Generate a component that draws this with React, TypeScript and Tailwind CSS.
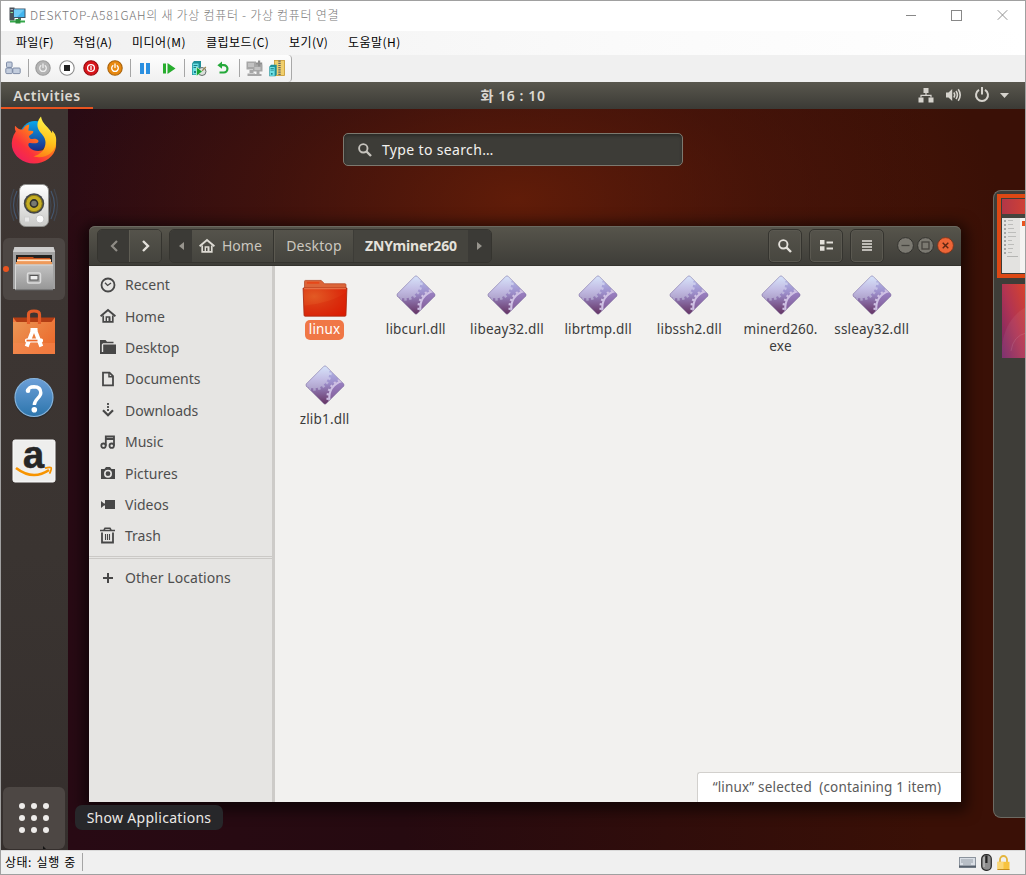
import React from "react";

const KR = "font-['Noto_Sans_CJK_KR',sans-serif]";

/* ---------- host window icons ---------- */

const HostLogo = () => (
  <svg width="17" height="17" viewBox="0 0 17 17">
    <rect x="0.5" y="0.5" width="5" height="13" fill="#4a5057" />
    <rect x="1.5" y="2" width="3" height="1" fill="#aab" />
    <rect x="1.5" y="5" width="3" height="1" fill="#8d9" />
    <rect x="4" y="1.5" width="12.5" height="9.5" fill="#3f5468" />
    <rect x="5" y="2.5" width="10.5" height="7.5" fill="#43b4ee" />
    <path d="M5 2.5h10.5L8 10H5z" fill="#6fcbf6" />
    <rect x="9" y="11" width="3" height="2" fill="#56616b" />
    <path d="M1 13.5h15v2H1z" fill="#35a84a" />
    <rect x="6.5" y="12" width="5" height="4.5" fill="#2c8f3c" />
  </svg>
);

const Round = ({ fill, ring, children }: { fill: string; ring: string; children: React.ReactNode }) => (
  <svg width="16" height="16" viewBox="0 0 16 16">
    <circle cx="8" cy="8" r="7.2" fill={fill} stroke={ring} strokeWidth="1.1" />
    {children}
  </svg>
);

const PowerGlyph = ({ c = "#fff" }: { c?: string }) => (
  <g fill="none" stroke={c} strokeWidth="1.3" strokeLinecap="round">
    <path d="M5.8 5.7a3.3 3.3 0 1 0 4.4 0" />
    <path d="M8 4v3.6" />
  </g>
);

const KeysIcon = () => (
  <svg width="16" height="14" viewBox="0 0 16 14" fill="#c3cddd" stroke="#75839f" strokeWidth="0.9">
    <rect x="1.5" y="1" width="5.6" height="5.4" rx="1" />
    <rect x="0.8" y="7" width="6.5" height="5.6" rx="1" />
    <rect x="7.8" y="7" width="7.4" height="5.6" rx="1" />
  </svg>
);

const Server = () => (
  <g>
    <path d="M1 3.5 3 1h7v11.5L8.5 15H1z" fill="#1e8f98" />
    <rect x="1.7" y="3.6" width="5.8" height="10.8" fill="#6fe0e4" />
    <path d="M2.5 5.5h4M2.5 7.5h4" stroke="#13727c" strokeWidth="0.9" />
    <rect x="3" y="11" width="2" height="2" fill="#18808a" />
  </g>
);

const CheckpointIcon = () => (
  <svg width="16" height="17" viewBox="0 0 16 17">
    <Server />
    <circle cx="11" cy="11.5" r="4" fill="#dce0dc" stroke="#66706c" />
    <path d="m11 11 3.8-4" stroke="#985" strokeWidth="1.2" />
    <path d="M5.5 7v9l6-4.5z" fill="#17a331" stroke="#eaffea" strokeWidth="0.6" />
  </svg>
);

const RevertIcon = () => (
  <svg width="14" height="14" viewBox="0 0 14 14" fill="none">
    <path d="M4.5 4.2h3.3a3.6 3.6 0 0 1 0 7.3H3.5" stroke="#25a93a" strokeWidth="2.2" />
    <path d="M6 0.6v7.2L1.4 4.2z" fill="#25a93a" />
  </svg>
);

const EnhancedIcon = () => (
  <svg width="17" height="17" viewBox="0 0 17 17" fill="#a6a6a6">
    <path d="M0.500 1.500H10v8H0.500zM3.500 10h4v3h-4zM1.500 13.500H9V16H1.500z" />
    <path d="M7 4.500h9.500v7H7zM10.500 11.500h3V14h-3zM8.500 14h7v2h-7z" />
    <path d="M12 0.500h2.200v2h2v2.200h-2v1.800H12V4.700h-2V2.500h2z" fill="#8f8f8f" />
    <path d="M2 3h6v4H2zM8.500 7h6v3h-6z" fill="#c2c2c2" />
  </svg>
);

const ArchiveIcon = () => (
  <svg width="16" height="17" viewBox="0 0 16 17">
    <rect x="5.500" y="0.5" width="10" height="15" fill="#f0cf6c" stroke="#c7982d" strokeWidth="0.8" />
    <path d="M10.500 0.500v14.500" stroke="#666" strokeWidth="2.400" strokeDasharray="1.2 1" />
    <g transform="translate(-.5 4) scale(.82)">
      <Server />
    </g>
  </svg>
);

const Sep = () => <span className="h-[18px] w-px shrink-0 bg-[#a5a5a5]" />;

const TitleBar = () => (
  <header className={`flex h-[30px] shrink-0 items-center bg-white pb-[2px] pl-2 text-[12px] font-light text-[#777] ${KR}`}>
    <HostLogo />
    <span className="ml-1 whitespace-nowrap tracking-[0.720px]">DESKTOP-A581GAH의 새 가상 컴퓨터 - 가상 컴퓨터 연결</span>
    <div className="ml-auto mr-[17px] flex items-center gap-[35px]">
      <svg width="10" height="11" viewBox="0 0 10 11"><path d="M0 5.500h10" stroke="#888" /></svg>
      <svg width="11" height="11" viewBox="0 0 11 11"><rect x="0.5" y="0.5" width="10" height="10" fill="none" stroke="#888" /></svg>
      <svg width="11" height="12" viewBox="0 0 12 12"><path d="m.8.800 10.400 10.400M11.200.800.800 11.200" stroke="#888" /></svg>
    </div>
  </header>
);

const MenuBar = () => (
  <nav className={`flex h-[24px] shrink-0 items-center bg-[linear-gradient(90deg,#f0f0f0,#fafafa_60%,#fff)] pb-[2px] pl-[15px] text-[12px] text-black ${KR}`}>
    <span className="w-[57px] tracking-[0.200px]">파일(F)</span>
    <span className="w-[59px] tracking-[0.400px]">작업(A)</span>
    <span className="w-[74px] tracking-[0.500px]">미디어(M)</span>
    <span className="w-[83px] tracking-[0.500px]">클립보드(C)</span>
    <span className="w-[59px] tracking-[0.450px]">보기(V)</span>
    <span className="tracking-[0.450px]">도움말(H)</span>
  </nav>
);

const ToolBar = () => (
  <div className="flex h-[27px] shrink-0 bg-[#f0f0f0]">
    <div className="flex w-[291px] items-center rounded-r-sm border-r border-[#a8a8a8] bg-[linear-gradient(#fdfdfd,#f0f0f0)] pb-px pl-[4px]">
      <KeysIcon />
      <span className="ml-[7px] flex"><Sep /></span>
      <div className="ml-[6px] flex gap-2">
        <Round fill="#b4b4b4" ring="#9b9b9b"><PowerGlyph c="#eee" /></Round>
        <Round fill="#fff" ring="#8c8c8c"><rect x="5" y="5" width="6" height="6" fill="#222" /></Round>
        <Round fill="#d8151b" ring="#98070b">
          <circle cx="8" cy="8" r="3.400" fill="none" stroke="#fff" strokeWidth="1.300" />
          <path d="M8 6v4" stroke="#fff" strokeWidth="1.300" />
        </Round>
        <Round fill="#e8890f" ring="#a9620a"><PowerGlyph /></Round>
      </div>
      <span className="ml-[7px] flex"><Sep /></span>
      <svg className="ml-[9px]" width="10" height="11" viewBox="0 0 10 11" fill="#2a8fe0"><path d="M0 0h4v11H0zM6 0h4v11H6z" /></svg>
      <svg className="ml-[13px]" width="13" height="11" viewBox="0 0 13 11" fill="#27ad2e"><path d="M0 .500h3v10H0zM4.500 0v11L12.500 5.500z" /></svg>
      <span className="ml-[8px] flex"><Sep /></span>
      <span className="ml-[6px]"><CheckpointIcon /></span>
      <span className="ml-[9px]"><RevertIcon /></span>
      <span className="ml-[9px] flex"><Sep /></span>
      <span className="ml-[6px]"><EnhancedIcon /></span>
      <span className="ml-[6px]"><ArchiveIcon /></span>
    </div>
  </div>
);

const StatusBar = () => (
  <footer className={`flex h-[24px] shrink-0 items-center border-t border-[#d9d9d9] bg-[#f0f0f0] pb-px pl-1 text-[12px] text-black ${KR}`}>
    <span className="w-[77px] whitespace-nowrap tracking-[0.500px] [word-spacing:1.500px]">상태: 실행 중</span>
    <Sep />
    <div className="ml-auto mr-[15px] flex items-center gap-[5px]">
      <svg width="17" height="11" viewBox="0 0 17 11">
        <rect x="0.500" y="0.500" width="16" height="10" fill="#d9dee5" stroke="#8b939d" />
        <path d="M0 9.500h17" stroke="#56606c" strokeWidth="2" />
        <path d="M2.500 3h12M2.500 5h12M4.500 7h8" stroke="#59636f" strokeDasharray="1 1" />
      </svg>
      <svg width="11" height="17" viewBox="0 0 11 17">
        <rect x="0.700" y="0.700" width="9.600" height="15.600" rx="4.300" fill="#8d8d8d" stroke="#2a2a2a" strokeWidth="1.200" />
        <path d="M3 3v10" stroke="#c9c9c9" />
        <rect x="4.300" y="1.500" width="2.200" height="7.500" fill="#222" />
      </svg>
      <svg width="13" height="15" viewBox="0 0 13 15">
        <path d="M3 7.500V4.500a3.500 3.500 0 0 1 7 0v3" fill="none" stroke="#e4b53c" strokeWidth="1.800" />
        <rect x="0.500" y="6.800" width="12" height="8" fill="#f7c33e" />
        <rect x="0.500" y="6.800" width="6" height="8" fill="#fbd775" />
        <path d="M.500 14.500h12" stroke="#c58d1c" />
      </svg>
    </div>
  </footer>
);

/* ---------- guest shell ---------- */

const TopPanel = () => (
  <div className="grid h-[27px] shrink-0 grid-cols-3 bg-[linear-gradient(#59574e,#3b3a35)] text-[14px] font-semibold text-[#dcd8d2]">
    <div className="flex">
      <div className="flex w-[92px] items-center justify-center border-b-2 border-[#e95420] pt-px tracking-[0.500px]">Activities</div>
    </div>
    <div className="flex items-center justify-center whitespace-pre pb-px font-['Noto_Sans','Noto_Sans_CJK_KR',sans-serif] tracking-[0.600px]">화 16 : 10</div>
    <div className="flex items-center justify-end pb-px pr-[16px]">
      <svg width="16" height="16" viewBox="0 0 16 16" fill="#d6d3cd">
        <path d="M5.500 1h5v5h-5zM.500 10.500h5v5h-5zM10.500 10.500h5v5h-5z" />
        <path d="M8 6v2.300M3 10.500V8.300h10v2.200" fill="none" stroke="#d6d3cd" strokeWidth="1.200" />
      </svg>
      <svg className="ml-[11px]" width="17" height="16" viewBox="0 0 17 16" fill="none" stroke="#d6d3cd" strokeWidth="1.600">
        <path d="M1 5.500h2.500L7.200 2v12L3.500 10.500H1z" fill="#d6d3cd" stroke="none" />
        <path d="M8.800 5.500q1.800 2.500 0 5M11 4q2.800 4 0 8M13.200 2.300q4 5.700 0 11.400" />
      </svg>
      <svg className="ml-[12px]" width="16" height="16" viewBox="0 0 16 16" fill="none" stroke="#d6d3cd" strokeWidth="2">
        <path d="M5 2.900a6 6 0 1 0 6 0M8 0v7.500" />
      </svg>
      <svg className="ml-[10px]" width="9" height="5" viewBox="0 0 9 5"><path d="M0 0h9L4.500 5z" fill="#d6d3cd" /></svg>
    </div>
  </div>
);

const Firefox = () => (
  <svg width="48" height="48" viewBox="0 0 48 48">
    <defs>
      <linearGradient id="ffx" x1="0" y1="1" x2="1" y2="0">
        <stop offset="0" stopColor="#e81670" />
        <stop offset=".35" stopColor="#fb323c" />
        <stop offset=".7" stopColor="#ff8a16" />
        <stop offset="1" stopColor="#ffe03a" />
      </linearGradient>
      <linearGradient id="ffg" x1=".3" y1="0" x2=".3" y2="1">
        <stop offset="0" stopColor="#0aa7ec" />
        <stop offset="1" stopColor="#1c2a86" />
      </linearGradient>
      <linearGradient id="ffy" x1=".4" y1="0" x2=".2" y2="1">
        <stop offset="0" stopColor="#fff44c" />
        <stop offset=".55" stopColor="#ffc31c" />
        <stop offset="1" stopColor="#ff7a18" />
      </linearGradient>
    </defs>
    <circle cx="25" cy="20" r="15" fill="url(#ffg)" />
    <path d="M5 10c-.300 2 0 4 .800 5.500C2.500 20 1.200 26 2 31c2 9.500 11 16.500 22 16.500S44.500 40 46 31c.700-7-1-12-4-15 1 6-1 12-5 16-5 4-13 4-17 0-2-2-2-4-1-5 3-.500 5 1 8 0 1.500-.600 2-1.500 1-3-2.500-2-5-1-7-1-1.500-.500-2-2-2-3l4-3 .300-2-5-.500 1-6c-3 .500-5 2-6.500 5-3 0-5-.500-7.500-3.500z" fill="url(#ffx)" />
    <path d="M31 .500c-3.500 4-4.500 8.500-2.500 13 2 4 7 7 7 13 0 7-5 12-12 14 11 3 21-3 22.500-13 .800-6-.500-10-4-13l.200 3C39 11 32 8 31 .500z" fill="url(#ffy)" />
  </svg>
);

const Rhythmbox = () => (
  <svg width="50" height="46" viewBox="0 0 50 46">
    <defs>
      <linearGradient id="spk" x1="0" y1="0" x2="0" y2="1">
        <stop offset="0" stopColor="#fff" />
        <stop offset="1" stopColor="#c9c9c7" />
      </linearGradient>
    </defs>
    <g fill="none" stroke="#4a6d96" strokeWidth="1.200">
      <path opacity=".6" d="M8 8Q1 22 8 36M42 8q7 14 0 28" />
      <path opacity=".3" d="M5 6q-7 16 0 32M45 6q7 16 0 32M11 9Q5 22 11 35M39 9q6 13 0 26" />
    </g>
    <rect x="10.500" y="1.500" width="29" height="42" rx="6" fill="url(#spk)" stroke="#8f8f8d" />
    <circle cx="25" cy="20.500" r="10.200" fill="#44464a" />
    <circle cx="25" cy="20.500" r="8.200" fill="#c4ad24" stroke="#8a7812" />
    <circle cx="25" cy="20.500" r="3.600" fill="#777a72" stroke="#2f312e" strokeWidth="1.600" />
    <circle cx="31" cy="36" r="4" fill="#fafafa" stroke="#c9c9c9" />
    <rect x="15.500" y="34" width="5" height="5" fill="#e9e9e9" stroke="#cfcfcf" />
  </svg>
);

const FilesIcon = () => (
  <svg width="44" height="46" viewBox="0 0 44 46">
    <defs>
      <linearGradient id="cab" x1="0" y1="0" x2="0" y2="1">
        <stop offset="0" stopColor="#c2c2c2" />
        <stop offset="1" stopColor="#969696" />
      </linearGradient>
    </defs>
    <path d="M2.500 1h39l1.500 5v37H1V6z" fill="#a1a1a1" />
    <path d="M2.500 1h39l1.500 5H1z" fill="#cdcdcd" />
    <rect x="4" y="9" width="36" height="16" fill="#22211f" />
    <path d="M6 11h15l1 1h16v8H6z" fill="#c4511c" />
    <path d="M5 13h34v3H5z" fill="#ee8b46" />
    <path d="M5 14.500h34" stroke="#ffe9d4" strokeWidth="1.500" />
    <path d="M4 16h36v3H4z" fill="#ee9a5a" />
    <path d="M3 18.500h38v25.500H3z" fill="url(#cab)" />
    <path d="M3 19h38M3.500 18.500V44" stroke="#d6d6d6" />
    <rect x="15.500" y="27" width="13" height="10" rx="1.500" fill="#a6a6a6" stroke="#dcdcdc" strokeWidth="1.500" />
    <rect x="18" y="29.500" width="8" height="4.500" fill="#eee" stroke="#555" />
    <path d="M3 44h38" stroke="#5e5e5e" />
  </svg>
);

const SoftwareIcon = () => (
  <svg width="44" height="46" viewBox="0 0 44 46">
    <defs>
      <linearGradient id="bag" x1="0" y1="0" x2="1" y2=".7">
        <stop offset="0" stopColor="#eb9655" />
        <stop offset="1" stopColor="#ec6a2c" />
      </linearGradient>
    </defs>
    <path d="M1 8.500h42v6H1z" fill="#b23d14" />
    <path d="m1 8.500 4 5H1zM43 8.500l-4 5h4z" fill="#f0773c" />
    <path d="M1 13h42v32H1z" fill="url(#bag)" />
    <path d="M1 34h42v11H1z" fill="#f58a52" opacity=".5" />
    <path d="M16.500 15V5.500q0-3.500 5.500-3.500t5.500 3.500V15" fill="none" stroke="#e35c28" strokeWidth="3.200" />
    <path d="M21 21 14.700 37.500M23 21l6.300 16.500" stroke="#fff" strokeWidth="4" fill="none" />
    <path d="M18.500 20.500h7" stroke="#fff" strokeWidth="3" />
    <rect x="13" y="29.500" width="18" height="4" rx="1.500" fill="#fff" />
    <rect x="14.500" y="30.700" width="11" height="1.700" fill="#ec6a2c" />
  </svg>
);

const HelpIcon = () => (
  <svg width="42" height="42" viewBox="0 0 42 42">
    <defs>
      <linearGradient id="hlp" x1="0" y1="0" x2="0" y2="1">
        <stop offset="0" stopColor="#6c9fd8" />
        <stop offset="1" stopColor="#2c75ac" />
      </linearGradient>
    </defs>
    <circle cx="21" cy="21.500" r="20" fill="#25292d" opacity=".6" />
    <circle cx="21" cy="20.500" r="19" fill="url(#hlp)" stroke="#87b4dc" strokeWidth="1.200" />
    <path d="M14.500 14q1-4.300 6.500-4.300 6.800.2 6.800 6C27.800 21 21.300 22 21.300 28" fill="none" stroke="#fff" strokeWidth="3.400" />
    <circle cx="15" cy="13.800" r="2.300" fill="#fff" />
    <circle cx="21.300" cy="32.700" r="2.800" fill="#fff" />
  </svg>
);

const AmazonIcon = () => (
  <svg className="overflow-visible" width="44" height="44" viewBox="0 0 44 44">
    <rect x="1" y="1" width="42" height="42" rx="2" fill="#eeeeed" stroke="#fafafa" />
    <text x="21.500" y="28.500" textAnchor="middle" fontFamily="Liberation Sans, sans-serif" fontWeight="700" fontSize="38" fill="#262626" stroke="#262626" strokeWidth=".6">a</text>
    <path d="M4 29q17 13 33 2" fill="none" stroke="#f79400" strokeWidth="2.600" />
    <path d="M33 29.200q5-1.500 6-.500t-1.500 6" fill="none" stroke="#f79400" strokeWidth="1.800" />
  </svg>
);

const Dock = () => (
  <aside className="flex w-[67px] shrink-0 flex-col items-center bg-[linear-gradient(#3e3633,#3a3431_60%,#352f2d)] pr-px">
    <div className="flex h-[64px] w-full items-center justify-center pb-[2px]"><Firefox /></div>
    <div className="flex h-[65px] w-full items-center justify-center"><Rhythmbox /></div>
    <div className="relative flex h-[62px] w-[62px] items-center justify-center rounded-md bg-[#4d4744]">
      <FilesIcon />
      <span className="absolute left-0 top-[28px] size-[6px] rounded-full bg-[#e95420]" />
    </div>
    <div className="flex h-[65px] w-full items-center justify-center pb-[2px]"><SoftwareIcon /></div>
    <div className="flex h-[65px] w-full items-center justify-center"><HelpIcon /></div>
    <div className="flex h-[62px] w-full items-center justify-center"><AmazonIcon /></div>
    <div className="relative mb-px mt-auto grid h-[62px] w-[62px] grid-cols-[repeat(3,6px)] place-content-center gap-[6px] rounded-md bg-[#4d4744]">
      {Array.from({ length: 9 }, (_, i) => (
        <span key={i} className="size-[6px] rounded-full bg-[#eeecea]" />
      ))}
      <svg className="absolute bottom-0 left-[39px]" width="4" height="3" viewBox="0 0 4 3"><path d="M1 0v3h3z" fill="#141414" /></svg>
    </div>
  </aside>
);

/* ---------- file manager ---------- */

const SearchGlyph = ({ c }: { c: string }) => (
  <svg width="14" height="14" viewBox="0 0 14 14" fill="none" stroke={c}>
    <circle cx="5.300" cy="5.300" r="4.200" strokeWidth="1.900" />
    <path d="m8.500 8.500 4.500 4.500" strokeWidth="2.400" />
  </svg>
);

const HomeGlyph = ({ c = "#474747" }: { c?: string }) => (
  <svg width="16" height="16" viewBox="0 0 16 16" fill="none" stroke={c}>
    <path d="M.600 8.300 8 2l7.400 6.300" strokeWidth="1.900" />
    <path d="M3.200 7.500v6.300h9.600V7.500" strokeWidth="1.700" />
    <path d="M6.300 13.800V9h3.400v4.800" strokeWidth="1.400" />
    <path d="M8.500 9.500h1.700v4H8.500z" fill={c} stroke="none" />
  </svg>
);

const K = "#474747";
const places: { name: string; icon: React.ReactNode }[] = [
  {
    name: "Recent",
    icon: (
      <svg width="16" height="16" viewBox="0 0 16 16" fill="none" stroke={K}>
        <circle cx="8" cy="8" r="6.500" strokeWidth="1.800" />
        <path d="M5 5.800 7.600 8.500 11 6" strokeWidth="1.300" />
      </svg>
    ),
  },
  { name: "Home", icon: <HomeGlyph /> },
  {
    name: "Desktop",
    icon: (
      <svg width="16" height="16" viewBox="0 0 16 16" fill={K}>
        <path d="M0 1h5.500L7 2.800h6.500v1.500H3L1.800 5.500V15H0z" />
        <path d="M3.200 5.500H16V15H1V13h2.200z" />
      </svg>
    ),
  },
  {
    name: "Documents",
    icon: (
      <svg width="16" height="16" viewBox="0 0 16 16" fill="none" stroke={K} strokeWidth="1.800">
        <path d="M3 1.700h6.500L13 5.200v9.200H3z" />
        <path d="M9 1.500v4.200h4" strokeWidth="1.500" />
      </svg>
    ),
  },
  {
    name: "Downloads",
    icon: (
      <svg width="16" height="16" viewBox="0 0 16 16" fill="none" stroke={K}>
        <path d="M8 1v9" strokeWidth="1.800" strokeDasharray="2 1" />
        <path d="m3 8.300 5 5 5-5" strokeWidth="2.200" />
      </svg>
    ),
  },
  {
    name: "Music",
    icon: (
      <svg width="16" height="16" viewBox="0 0 16 16" fill="none" stroke={K} strokeWidth="1.800">
        <circle cx="3.500" cy="11.700" r="2.200" />
        <circle cx="11.700" cy="11.700" r="2.200" />
        <path d="M5.800 11.700V2.500H14v9.200M5.800 5H14" />
      </svg>
    ),
  },
  {
    name: "Pictures",
    icon: (
      <svg width="16" height="16" viewBox="0 0 16 16">
        <path d="M1 4h3.500L6 2h4l1.500 2H15v10H1z" fill={K} />
        <circle cx="8" cy="8.700" r="3.200" fill="none" stroke="#e6e5e3" strokeWidth="1.600" />
      </svg>
    ),
  },
  {
    name: "Videos",
    icon: (
      <svg width="16" height="16" viewBox="0 0 16 16" fill={K}>
        <path d="M5 4h10v9H5zM1 5l3 2.500h1v2H4L1 12z" />
      </svg>
    ),
  },
  {
    name: "Trash",
    icon: (
      <svg width="16" height="17" viewBox="0 0 16 17" fill="none" stroke={K}>
        <path d="M0 3.500h15M4 3l1-1.700h5L11 3" strokeWidth="1.500" />
        <path d="M2 5.500v10h11v-10" strokeWidth="1.800" />
        <path d="M5.500 7v6M7.500 7v6M9.500 7v6" strokeWidth="1.100" />
      </svg>
    ),
  },
];

const Gear = () => (
  <svg width="40" height="40" viewBox="0 0 42 42">
    <defs>
      <linearGradient id="gd" x1="0" y1="0" x2="0" y2="1">
        <stop offset="0" stopColor="#b9c4f0" />
        <stop offset=".45" stopColor="#9c8dca" />
        <stop offset="1" stopColor="#63305f" />
      </linearGradient>
      <linearGradient id="gl" gradientUnits="userSpaceOnUse" x1="0" y1="0" x2="0" y2="30">
        <stop offset="0" stopColor="#d8e6fb" />
        <stop offset=".5" stopColor="#c3bde4" />
        <stop offset="1" stopColor="#a596c0" />
      </linearGradient>
      <clipPath id="gc">
        <path d="M19.700 1.500q1.300-1.200 2.600 0l18.200 18.200q1.200 1.300 0 2.600L22.300 40.500q-1.300 1.200-2.600 0L1.500 22.300q-1.200-1.300 0-2.600z" />
      </clipPath>
    </defs>
    <path d="M21 2.500 40.500 22 21 41.500 1.500 22z" fill="#403048" opacity=".3" />
    <g clipPath="url(#gc)">
      <rect width="42" height="42" fill="url(#gd)" />
      <circle cx="9" cy="8" r="16.500" fill="url(#gl)" />
      <circle cx="9" cy="8" r="17.500" fill="none" stroke="url(#gl)" strokeWidth="3" strokeDasharray="2.600 2.400" />
      <circle cx="43" cy="34" r="17" fill="#9675b8" opacity=".55" />
      <circle cx="43" cy="34" r="17.500" fill="none" stroke="#cfc1e4" strokeWidth="2.200" />
      <circle cx="43" cy="34" r="19.300" fill="none" stroke="#cfc1e4" strokeWidth="2.400" strokeDasharray="2.200 2.600" />
    </g>
    <path d="M19.700 1.500q1.300-1.200 2.600 0l18.200 18.200q1.200 1.300 0 2.600L22.300 40.500q-1.300 1.200-2.600 0L1.500 22.300q-1.200-1.300 0-2.600z" fill="none" stroke="#7b6b9c" strokeOpacity=".5" />
  </svg>
);

const Folder = () => (
  <svg width="46" height="40" viewBox="0 0 48 42">
    <defs>
      <radialGradient id="fd" cx=".25" cy=".3" r=".9">
        <stop offset="0" stopColor="#e25a24" />
        <stop offset=".6" stopColor="#dc3411" />
        <stop offset="1" stopColor="#de1d02" />
      </radialGradient>
    </defs>
    <path d="M2.500 2.500q0-1 1-1h16.500l3.500 3.500h21.500q1 0 1 1v8h-43.500z" fill="#dc6539" stroke="#b54725" strokeWidth=".8" />
    <path d="M5 4h13" stroke="#e64719" strokeWidth="2" />
    <path d="M1 9.500h46L46 38q0 1-1 1H3q-1 0-1-1z" fill="url(#fd)" stroke="#aa2a10" strokeWidth=".9" />
    <path d="M2 10.200h44" stroke="#f08258" />
    <path d="M2 28q30-3 44-14v24H3z" fill="#d31c04" opacity=".25" />
  </svg>
);

const File = ({ name, second, folder }: { name: string; second?: string; folder?: boolean }) => (
  <div className="flex h-[90px] flex-col items-center whitespace-nowrap text-[13.500px] leading-[17px] tracking-[0.170px] text-[#3b3b3b]">
    <div className="flex h-[42px] items-start">{folder ? <span className="pt-[4px]"><Folder /></span> : <Gear />}</div>
    {folder ? (
      <span className="mt-[3px] h-[20px] rounded-[5px] bg-[#f07746] px-[4px] pt-px text-white">{name}</span>
    ) : (
      <span className="mt-[4px]">{name}</span>
    )}
    {second && <span>{second}</span>}
  </div>
);

const HeaderButton = ({ children }: { children: React.ReactNode }) => (
  <div className="flex h-[34px] w-[34px] items-center justify-center rounded-[5px] border border-[#35342f] bg-[linear-gradient(#55534b,#47463f)] shadow-[inset_0_0_0_1px_#5a5850]">
    {children}
  </div>
);

const HeaderBar = () => (
  <div className="flex h-[40px] shrink-0 items-center rounded-t-[6px] border-b border-[#34332e] bg-[linear-gradient(#57554c,#3e3d38)] pl-[8px] pr-[7px] text-[14px] text-[#cbc7bf] shadow-[inset_0_1px_0_#6b6960]">
    <div className="flex h-[34px] w-[65px] overflow-hidden rounded-[5px] border border-[#35342f]">
      <div className="flex w-[31px] items-center justify-center bg-[#3b3a36]">
        <svg width="8" height="12" viewBox="0 0 8 12"><path d="M7 1 2 6l5 5" fill="none" stroke="#8f8c86" strokeWidth="2.200" /></svg>
      </div>
      <div className="flex flex-1 items-center justify-center border-l border-[#5f5d54] bg-[linear-gradient(#55534b,#45443e)]">
        <svg width="8" height="12" viewBox="0 0 8 12"><path d="m1 1 5 5-5 5" fill="none" stroke="#e4e1db" strokeWidth="2.400" /></svg>
      </div>
    </div>
    <div className="ml-[7px] flex h-[34px] w-[323px] overflow-hidden rounded-[5px] border border-[#35342f]">
      <div className="flex w-[22px] items-center justify-center bg-[#3b3a36]">
        <svg width="5" height="8" viewBox="0 0 5 8"><path d="M5 0v8L0 4z" fill="#98958e" /></svg>
      </div>
      <div className="flex w-[82px] items-center border-r border-[#35342f] bg-[linear-gradient(#55534b,#45443e)] pl-[7px]">
        <HomeGlyph c="#dedbd4" />
        <span className="ml-[7px]">Home</span>
      </div>
      <div className="flex w-[80px] items-center justify-center border-l border-r border-l-[#5b5950] border-r-[#3d3c37] bg-[linear-gradient(#55534b,#45443e)] tracking-[0.150px]">Desktop</div>
      <div className="flex flex-1 items-center justify-center bg-[#45443e] font-bold tracking-[-0.150px] text-[#e4e1db]">ZNYminer260</div>
      <div className="flex w-[23px] items-center justify-center bg-[#3b3a36]">
        <svg width="5" height="8" viewBox="0 0 5 8"><path d="M0 0v8l5-4z" fill="#98958e" /></svg>
      </div>
    </div>
    <div className="ml-auto flex gap-[7px]">
      <HeaderButton><SearchGlyph c="#e4e1db" /></HeaderButton>
      <HeaderButton>
        <svg width="13" height="11" viewBox="0 0 13 11" fill="#e4e1db"><path d="M0 0h4.500v4.500H0zM0 6.200h4.500v4.500H0zM6.500 1.500H13v2H6.500zM6.500 7.500H13v2H6.500z" /></svg>
      </HeaderButton>
      <HeaderButton>
        <svg width="10" height="11" viewBox="0 0 10 11"><path d="M0 1h10M0 4h10M0 7h10M0 10h10" stroke="#e4e1db" strokeWidth="1.600" /></svg>
      </HeaderButton>
    </div>
    <div className="ml-[13px] flex gap-[3px]">
      <svg width="17" height="17" viewBox="0 0 17 17"><circle cx="8.500" cy="8.500" r="7.900" fill="#7b7971" stroke="#34332f" /><path d="M4.500 8.500h8" stroke="#45433e" strokeWidth="1.300" /></svg>
      <svg width="17" height="17" viewBox="0 0 17 17"><circle cx="8.500" cy="8.500" r="7.900" fill="#7b7971" stroke="#34332f" /><rect x="5" y="5" width="7" height="7" fill="none" stroke="#45433e" strokeWidth="1.300" /></svg>
      <svg width="17" height="17" viewBox="0 0 17 17"><circle cx="8.500" cy="8.500" r="7.900" fill="#ed6537" stroke="#7a3016" strokeWidth=".8" /><path d="m5.700 5.700 5.600 5.600M11.300 5.700l-5.600 5.600" stroke="#5c2613" strokeWidth="1.400" /></svg>
    </div>
  </div>
);

const FileManager = () => (
  <div className="relative ml-[21px] mt-[60px] flex h-[576px] w-[872px] flex-col rounded-t-[6px] shadow-[0_3px_14px_6px_rgba(0,0,0,0.55)]">
    <HeaderBar />
    <div className="flex flex-1">
      <div className="w-[186px] border-r-[3px] border-[#cdcbc8] bg-[#e6e5e3] pt-[3px] text-[14px] text-[#4e4e4e]">
        {places.map((p) => (
          <div key={p.name} className="flex h-[31.400px] items-center pl-[11px]">
            {p.icon}
            <span className="ml-[9px]">{p.name}</span>
          </div>
        ))}
        <div className="mt-[4px] h-[3px] border-y border-[#cbc9c6]" />
        <div className="mt-[3px] flex h-[32px] items-center pl-[11px]">
          <svg width="16" height="16" viewBox="0 0 16 16"><path d="M8 3v10M3 8h10" stroke={K} strokeWidth="2" /></svg>
          <span className="ml-[9px] tracking-[0.060px]">Other Locations</span>
        </div>
      </div>
      <div className="flex flex-1 flex-col bg-[#f2f1ef]">
        <div className="ml-[4px] mt-[9px] grid grid-cols-[repeat(7,91.200px)]">
          <File name="linux" folder />
          <File name="libcurl.dll" />
          <File name="libeay32.dll" />
          <File name="librtmp.dll" />
          <File name="libssh2.dll" />
          <File name="minerd260." second="exe" />
          <File name="ssleay32.dll" />
          <File name="zlib1.dll" />
        </div>
        <div className="ml-auto mt-auto flex h-[30px] w-[264px] items-center justify-center whitespace-pre rounded-tl-[3px] border-l border-t border-[#d2d0cd] bg-white pr-[5px] text-[13.500px] tracking-[0.170px] text-[#5a5a5a]">
          “linux” selected  (containing 1 item)
        </div>
      </div>
    </div>
  </div>
);

const Workspaces = () => (
  <div className="mt-[81px] flex h-[628px] w-[32px] shrink-0 flex-col overflow-hidden rounded-l-[8px] border-y border-l border-[#6d6a62] bg-[#3e3d38] pl-[3px] pt-[3px]">
    <div className="h-[84px] w-[28px] border-y-4 border-l-4 border-[#dd4814] bg-[#3e3d38] pl-px pt-px">
      <div className="flex h-[74px] flex-col bg-[linear-gradient(90deg,#b23748,#cf4035)]">
        <div className="mt-[15px] h-[4px] bg-[#45443e]" />
        <div className="flex flex-1">
          <div className="flex w-[19px] flex-col gap-[2px] bg-[#e3e2e0] pl-[2px] pt-[2px]">
            {[5, 5, 6, 8, 8, 4, 6, 5, 4].map((w, i) => (
              <span key={i} className="flex h-[2px] gap-[2px]">
                <i className="h-[2px] w-[2px] bg-[#a5a5a5]" />
                <i className="h-[1px] bg-[#bdbdbb]" style={{ width: w }} />
              </span>
            ))}
            <i className="ml-[3px] h-px w-[11px] bg-[#b5b5b3]" />
          </div>
          <div className="flex-1 bg-[#f5f4f2] pl-[2px] pt-[3px]"><div className="h-[5px] w-[3px] bg-[#e95420]" /></div>
        </div>
      </div>
    </div>
    <svg className="ml-[5px] mt-[6px]" width="24" height="74" viewBox="0 0 24 74">
      <defs>
        <linearGradient id="wp" x1="1" y1="0" x2="0" y2="1">
          <stop offset="0" stopColor="#d9442b" />
          <stop offset=".5" stopColor="#b13452" />
          <stop offset="1" stopColor="#752668" />
        </linearGradient>
      </defs>
      <rect width="24" height="74" fill="url(#wp)" />
      <path d="M24 23Q3 35 0 62v12h24z" fill="#fff" opacity=".06" />
      <path d="M24 49q-13 3-15 18" fill="none" stroke="#fff" opacity=".1" />
    </svg>
  </div>
);

const Desktop = () => (
  <div className="relative flex flex-1 bg-[radial-gradient(ellipse_480px_250px_at_450px_90px,rgba(102,30,8,0.9),rgba(90,26,8,0.5)_50%,transparent),linear-gradient(90deg,#280a14,#260a10_35%,#3a1006_90%)]">
    <div className="w-[925px] shrink-0">
      <div className="ml-[275px] mt-[24px] flex h-[33px] w-[340px] items-center rounded-[5px] border border-[#7d796f] bg-[#3d3c37] pl-[14px] text-[14px] tracking-[0.350px] text-[#f3f1ee] shadow-[inset_0_2px_3px_#2c2b28]">
        <SearchGlyph c="#c6c3bd" />
        <span className="ml-[10px]">Type to search…</span>
      </div>
      <FileManager />
    </div>
    <Workspaces />
    <div className="absolute bottom-[20px] left-[7px] flex h-[25px] w-[148px] items-center justify-center whitespace-nowrap rounded-[7px] bg-[#27272a] text-[14px] tracking-[0.300px] text-[#eceae7]">
      Show Applications
    </div>
  </div>
);

export default function App() {
  return (
    <div className="flex h-[875px] w-[1026px] flex-col overflow-hidden border border-[#a0a0a0] font-['Noto_Sans',sans-serif]">
      <TitleBar />
      <MenuBar />
      <ToolBar />
      <TopPanel />
      <main className="flex min-h-0 flex-1">
        <Dock />
        <Desktop />
      </main>
      <StatusBar />
    </div>
  );
}
